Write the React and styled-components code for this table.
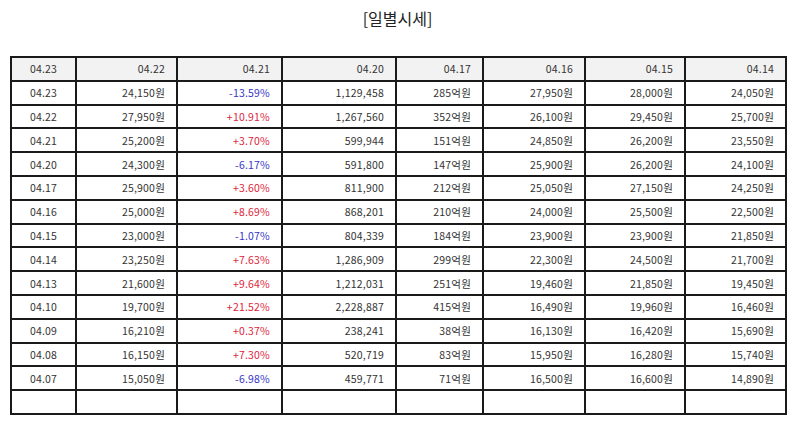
import React from "react";
import styled, { createGlobalStyle } from "styled-components";

const GlobalStyle = createGlobalStyle`
  body {
    margin: 0;
    background: #fff;
    font-family: "Noto Sans CJK KR", "Noto Sans", sans-serif;
  }
`;

const Page = styled.div`
  width: 795px;
  height: 425px;
  padding: 0 10px;
  box-sizing: border-box;
  overflow: hidden;
`;

const Title = styled.h2`
  margin: 0 0 20px;
  height: 36px;
  line-height: 36px;
  text-align: center;
  font-size: 16px;
  font-weight: 400;
  color: #222;
`;

const Table = styled.table`
  width: 775px;
  table-layout: fixed;
  border-collapse: collapse;
  font-size: 10.5px;
  color: #333;
`;

const Cell = styled.td`
  height: 21.8px;
  padding: 0 ${(p) => (p.$first ? "0" : "11px")} 0 0;
  border: 2px solid #1a1a1a;
  text-align: ${(p) => (p.$first ? "center" : "right")};
  color: ${(p) => (p.$tone === "up" ? "#e0243a" : p.$tone === "down" ? "#3535c8" : "#333")};
  background: ${(p) => (p.$head ? "#f2f2f2" : "#fff")};
  font-weight: 400;
  white-space: nowrap;
  letter-spacing: 0.2px;
`;

const widths = [65, 101, 105, 114, 87, 102, 100, 101];

const head = ["04.23", "04.22", "04.21", "04.20", "04.17", "04.16", "04.15", "04.14"];

const rows = [
  ["04.23", "24,150원", "-13.59%", "1,129,458", "285억원", "27,950원", "28,000원", "24,050원"],
  ["04.22", "27,950원", "+10.91%", "1,267,560", "352억원", "26,100원", "29,450원", "25,700원"],
  ["04.21", "25,200원", "+3.70%", "599,944", "151억원", "24,850원", "26,200원", "23,550원"],
  ["04.20", "24,300원", "-6.17%", "591,800", "147억원", "25,900원", "26,200원", "24,100원"],
  ["04.17", "25,900원", "+3.60%", "811,900", "212억원", "25,050원", "27,150원", "24,250원"],
  ["04.16", "25,000원", "+8.69%", "868,201", "210억원", "24,000원", "25,500원", "22,500원"],
  ["04.15", "23,000원", "-1.07%", "804,339", "184억원", "23,900원", "23,900원", "21,850원"],
  ["04.14", "23,250원", "+7.63%", "1,286,909", "299억원", "22,300원", "24,500원", "21,700원"],
  ["04.13", "21,600원", "+9.64%", "1,212,031", "251억원", "19,460원", "21,850원", "19,450원"],
  ["04.10", "19,700원", "+21.52%", "2,228,887", "415억원", "16,490원", "19,960원", "16,460원"],
  ["04.09", "16,210원", "+0.37%", "238,241", "38억원", "16,130원", "16,420원", "15,690원"],
  ["04.08", "16,150원", "+7.30%", "520,719", "83억원", "15,950원", "16,280원", "15,740원"],
  ["04.07", "15,050원", "-6.98%", "459,771", "71억원", "16,500원", "16,600원", "14,890원"],
  ["", "", "", "", "", "", "", ""],
];

const toneOf = (v, i) => {
  if (i !== 2) return undefined;
  if (v.startsWith("+")) return "up";
  if (v.startsWith("-")) return "down";
  return undefined;
};

export default function App() {
  return (
    <Page>
      <GlobalStyle />
      <Title>[일별시세]</Title>
      <Table>
        <colgroup>
          {widths.map((w, i) => (
            <col key={i} style={{ width: w }} />
          ))}
        </colgroup>
        <thead>
          <tr>
            {head.map((h, i) => (
              <Cell as="th" key={i} $head $first={i === 0}>
                {h}
              </Cell>
            ))}
          </tr>
        </thead>
        <tbody>
          {rows.map((r, ri) => (
            <tr key={ri}>
              {r.map((v, i) => (
                <Cell key={i} $first={i === 0} $tone={toneOf(v, i)}>
                  {v}
                </Cell>
              ))}
            </tr>
          ))}
        </tbody>
      </Table>
    </Page>
  );
}
